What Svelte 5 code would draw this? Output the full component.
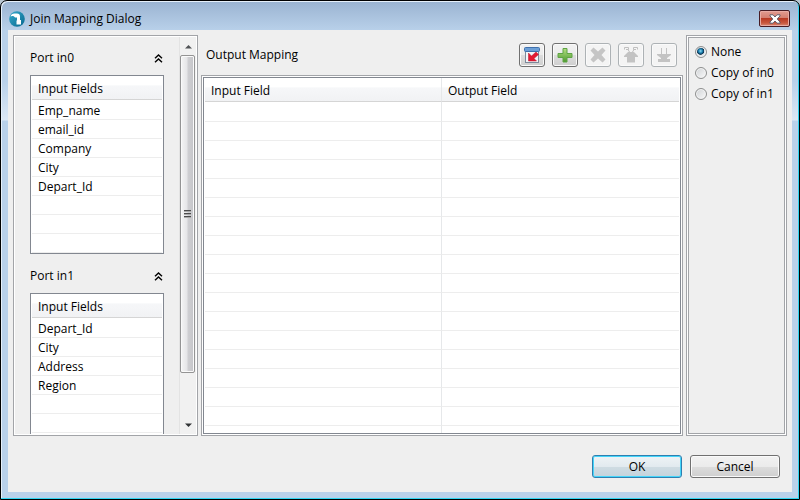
<script>
  const ports = [
    { name: 'in0', fields: ['Emp_name', 'email_id', 'Company', 'City', 'Depart_Id'] },
    { name: 'in1', fields: ['Depart_Id', 'City', 'Address', 'Region'] }
  ];
  const rowsPerPort = 8;
  const mappingRows = Array.from({ length: 18 }, (_, i) => i);
  const modes = ['None', 'Copy of in0', 'Copy of in1'];

  let mode = $state('None');
  let open = $state({ in0: true, in1: true });

  const padded = (fields) => [...fields, ...Array(rowsPerPort - fields.length).fill('')];
</script>

<div class="window">
  <header>
    <svg class="logo" width="16" height="16" viewBox="0 0 16 16" aria-hidden="true">
      <defs>
        <linearGradient id="teal" x1="0" y1="0" x2="1" y2="1">
          <stop offset="0" stop-color="#35a9cc" />
          <stop offset="1" stop-color="#07688f" />
        </linearGradient>
      </defs>
      <circle cx="8" cy="8" r="7.8" fill="url(#teal)" />
      <path d="M1.500 5.500C2 3.500 3.500 2.500 5.500 2.500H8C10 2.500 11 3.500 11 5.500V9H12V13.500H7.500V9.500H8V6.500H6C5.500 5 3 4.500 1.500 5.500Z" fill="#fff" />
    </svg>
    <h1>Join Mapping Dialog</h1>
    <button class="close" aria-label="Close">
      <svg width="12" height="10" viewBox="0 0 12 10">
        <path d="M1 .8H4L6 3L8 .8H11V2L8.200 5L11 8V9.200H8L6 7L4 9.200H1V8L3.800 5L1 2Z" fill="#fff" stroke="#535666" stroke-width=".9" />
      </svg>
    </button>
  </header>

  <main>
    <div class="panes">
      <section class="inputs">
        <div class="ports">
          {#each ports as port}
            <button class="port" aria-expanded={open[port.name]} onclick={() => (open[port.name] = !open[port.name])}>
              Port {port.name}
              <svg class:closed={!open[port.name]} width="9" height="9" viewBox="0 0 9 9" fill="none" stroke="#000" stroke-width="1.4">
                <path d="M1 4.300L4.500 1L8 4.300M1 8.300L4.500 5L8 8.300" />
              </svg>
            </button>
            {#if open[port.name]}
              <div class="box">
                <table>
                  <thead><tr><th>Input Fields</th></tr></thead>
                  <tbody>
                    {#each padded(port.fields) as field}
                      <tr><td>{field}</td></tr>
                    {/each}
                  </tbody>
                </table>
              </div>
            {/if}
          {/each}
        </div>
        <div class="scrollbar" aria-hidden="true">
          <svg class="arrow" width="9" height="5" viewBox="0 0 9 5"><path d="M1 4.500L4.500 1L8 4.500Z" fill="#505356" /></svg>
          <div class="track">
            <div class="thumb"><i></i><i></i><i></i></div>
          </div>
          <svg class="arrow" width="9" height="5" viewBox="0 0 9 5"><path d="M1 0.500L4.500 4L8 0.500Z" fill="#303335" /></svg>
        </div>
      </section>

      <section class="output">
        <div class="toolbar">
          <h2>Output Mapping</h2>
          <button aria-label="Pull fields">
            <svg width="16" height="16" viewBox="0 0 16 16">
              <rect x="1.500" y="1.500" width="13" height="14" fill="#f2f5f8" stroke="#7c8a9b" />
              <rect x=".5" y=".5" width="15" height="4" rx="1" fill="#6c9fd6" stroke="#3f70ad" />
              <path d="M4.500 6V14H12.500L10 11.500L14.500 7.500L12 5L7.500 9Z" fill="#e31932" stroke="#b91228" stroke-width=".5" />
            </svg>
          </button>
          <button aria-label="Add">
            <svg width="16" height="16" viewBox="0 0 16 16">
              <defs>
                <linearGradient id="green" x1="0" y1="0" x2="0" y2="1">
                  <stop offset="0" stop-color="#b5df83" />
                  <stop offset="1" stop-color="#4d9a2e" />
                </linearGradient>
              </defs>
              <path d="M6 1.500H10V6.500H15V10.500H10V15H6V10.500H1V6.500H6Z" fill="url(#green)" stroke="#5fa445" />
            </svg>
          </button>
          <button aria-label="Delete" disabled>
            <svg width="16" height="16" viewBox="0 0 16 16"><path d="M0.500 3.500L3.500 .5L8 4.500L12.500 .5L15.500 3.500L11.500 8L15.500 12.500L12.500 15.500L8 11.500L3.500 15.500L0.500 12.500L4.500 8Z" fill="#c5c5c5" /></svg>
          </button>
          <button aria-label="Move up" disabled>
            <svg width="16" height="16" viewBox="0 0 16 16" fill="none" stroke="#bfbfbf">
              <path d="M5 5H11L15 9V10H12V15.500H4V10H1V9Z" fill="#c3c3c3" stroke="none" />
              <path d="M1.500 2.500V.5H5.500V2.500H3M14.500 2.500V.5H10.500V2.500H13M5 2.500L6.500 5M11 2.500L9.500 5" />
            </svg>
          </button>
          <button aria-label="Move down" disabled>
            <svg width="16" height="16" viewBox="0 0 16 16">
              <path d="M5 1H6V7H10V1H11V7H15V8L11 11V12H14V15H2V12H5V11L1 8V7H5Z" fill="#c3c3c3" />
            </svg>
          </button>
        </div>
        <div class="outer">
          <div class="box mapping">
            <table>
              <thead><tr><th>Input Field</th><th>Output Field</th></tr></thead>
              <tbody>
                {#each mappingRows as row (row)}
                  <tr><td></td><td></td></tr>
                {/each}
              </tbody>
            </table>
          </div>
        </div>
      </section>

      <section class="modes">
        {#each modes as name}
          <label><input type="radio" name="mode" value={name} bind:group={mode} />{name}</label>
        {/each}
      </section>
    </div>

    <footer>
      <button class="action default">OK</button>
      <button class="action">Cancel</button>
    </footer>
  </main>
</div>

<style>
  :global(body) {
    background: #b9c7d3;
  }
  * {
    box-sizing: border-box;
  }
  .window {
    display: flex;
    flex-direction: column;
    height: 100vh;
    border: 1px solid #000;
    border-radius: 7px 7px 0 0;
    box-shadow: inset -1px -1px #30d5f2, inset 1px 1px #e6f0fa;
    background: linear-gradient(#9ab3d1, #b9d1ea 30px, #b9d1ea 80px, #dce8f5 119px, #b9d1ea 120px);
    padding: 0 7px 7px;
    font: 12px/16px "Open Sans", "Noto Sans", sans-serif;
    color: #000;
  }
  button {
    font: inherit;
    color: inherit;
    padding: 0;
  }
  h1, h2 {
    margin: 0;
    font: inherit;
  }
  header {
    display: flex;
    align-items: center;
    height: 29px;
    flex: none;
    padding: 6px 2px 0 1px;
  }
  h1 {
    flex: 1;
    margin-left: 5px;
  }
  .close {
    display: grid;
    place-items: center;
    width: 31px;
    height: 17px;
    border: 1px solid #471c24;
    border-radius: 2px;
    box-shadow: inset 0 0 0 1px #e8aba4;
    background: linear-gradient(#e29c91, #d58072 45%, #b93a24 50%, #c8583f 80%, #d98b75);
  }
  main {
    flex: 1;
    min-height: 0;
    display: flex;
    flex-direction: column;
    padding: 5px 5px 14px;
    background: #efefef;
  }
  .panes {
    flex: 1;
    min-height: 0;
    display: flex;
    gap: 3px;
  }
  .inputs {
    display: flex;
    flex: none;
    width: 185px;
    padding: 1px;
    border: 1px solid #a2a4a8;
    box-shadow: inset 0 0 0 1px #fff;
  }
  .ports {
    flex: 1;
    overflow: hidden;
    padding: 12px 15px 0;
  }
  .port {
    display: flex;
    align-items: center;
    justify-content: space-between;
    width: 100%;
    height: 18px;
    padding-right: 1px;
    border: 0;
    background: none;
  }
  .closed {
    transform: rotate(180deg);
  }
  .box {
    height: 179px;
    margin: 8px 0 13px;
    padding: 0 1px;
    overflow: hidden;
    border: 1px solid #828790;
    background: #fff;
  }
  table {
    width: 100%;
    table-layout: fixed;
    border-collapse: separate;
    border-spacing: 0;
  }
  th {
    height: 24px;
    padding: 2px 6px 0;
    font-weight: 400;
    text-align: left;
    border-bottom: 1px solid #d5d5d5;
    background: linear-gradient(#fff 40%, #f6f7f9 42%, #f1f2f4);
  }
  td {
    height: 19px;
    padding: 1px 6px 0;
    border-bottom: 1px solid #ededed;
  }
  tbody tr:first-child td {
    height: 20px;
    padding-top: 2px;
  }
  th:not(:last-child), td:not(:last-child) {
    border-right: 1px solid #e6e8ea;
  }
  .scrollbar {
    display: flex;
    flex-direction: column;
    align-items: center;
    width: 17px;
    border-left: 1px solid #e3e3e3;
    background: #f1f1f1;
  }
  .arrow {
    flex: none;
    margin: 7px 0 6px;
  }
  .track {
    flex: 1;
    width: 100%;
  }
  .thumb {
    display: flex;
    flex-direction: column;
    align-items: center;
    justify-content: center;
    gap: 1px;
    height: 88%;
    width: 15px;
    border: 1px solid #949494;
    border-radius: 2px;
    box-shadow: inset 0 0 0 1px #fafafa;
    background: linear-gradient(90deg, #f5f5f5, #e6e6e8 45%, #cfcfd2 55%, #c4c4c8);
  }
  .thumb i {
    width: 7px;
    height: 2px;
    border-top: 1px solid #4c4c4c;
    background: #aaa;
  }
  .output {
    flex: 1;
    min-width: 0;
    display: flex;
    flex-direction: column;
  }
  .toolbar {
    display: flex;
    align-items: center;
    gap: 7px;
    height: 40px;
    flex: none;
    padding: 0 6px 0 5px;
  }
  h2 {
    flex: 1;
  }
  .toolbar button {
    display: grid;
    place-items: center;
    width: 26px;
    height: 24px;
    border: 1px solid #707070;
    border-radius: 3px;
    box-shadow: inset 0 0 0 1px #fafafa;
    background: linear-gradient(#f2f2f2, #ebebeb 50%, #dddddd 50%, #cfcfcf);
  }
  .toolbar button:disabled {
    border-color: #adb2b5;
    background: #f4f4f4;
  }
  .outer {
    flex: 1;
    min-height: 0;
    display: flex;
    padding: 1px;
    border: 1px solid #a2a4a8;
    background: #fff;
  }
  .mapping {
    flex: 1;
    height: auto;
    margin: 0;
  }
  .modes {
    display: flex;
    flex-direction: column;
    gap: 5px;
    flex: none;
    width: 101px;
    padding: 8px;
    border: 1px solid #a2a4a8;
    box-shadow: inset 0 0 0 1px #fff, inset 0 0 0 2px #a2a4a8;
  }
  label {
    display: flex;
    align-items: center;
    gap: 4px;
    white-space: nowrap;
  }
  input {
    appearance: none;
    flex: none;
    width: 12px;
    height: 12px;
    margin: 0;
    border: 1px solid #8e8f8f;
    border-radius: 50%;
    box-shadow: inset 0 0 0 1px #f4f4f4;
    background: linear-gradient(135deg, #cfd2d5, #fafafa);
  }
  input:checked {
    background: radial-gradient(circle at 45% 40%, #8fdcf5, #1b7fae 25%, #0c2f4c 42%, #e0e6ea 50%);
  }
  footer {
    display: flex;
    justify-content: flex-end;
    gap: 8px;
    margin-top: 19px;
    padding-right: 7px;
  }
  .action {
    width: 90px;
    height: 23px;
    border: 1px solid #707070;
    border-radius: 3px;
    box-shadow: inset 0 0 0 1px #fafafa;
    background: linear-gradient(#f2f2f2, #ebebeb 50%, #dddddd 50%, #cfcfcf);
  }
  .default {
    border-color: #2f7fb0;
    box-shadow: inset 0 0 0 1px #43d5fa;
    background: linear-gradient(#eef3f6, #e2eaef 50%, #cfdce3 50%, #c4d3dc);
  }
</style>
